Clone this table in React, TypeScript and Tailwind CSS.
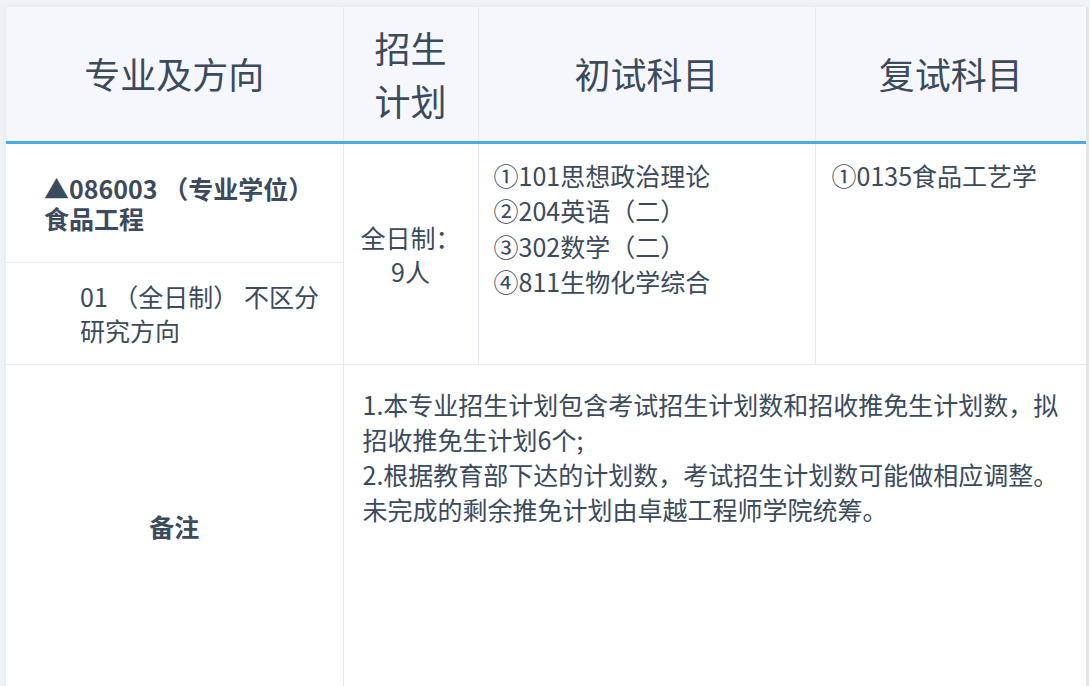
const font = { fontFamily: '"Noto Sans CJK SC", "Noto Sans", sans-serif' };

const firstExam = [
  "①101思想政治理论",
  "②204英语（二）",
  "③302数学（二）",
  "④811生物化学综合",
];

export default function App() {
  return (
    <div
      className="flex min-h-[686px] w-[1090px] bg-[#f1f4f7] pl-[6px] pt-[7px] text-[#3b4a5c]"
      style={font}
    >
      <div className="w-[1080px] bg-white shadow-[0_0_6px_rgba(40,60,90,0.08)]">
        <table className="w-[1080px] table-fixed border-collapse">
          <colgroup>
            <col className="w-[337px]" />
            <col className="w-[135px]" />
            <col className="w-[337px]" />
            <col className="w-[271px]" />
          </colgroup>
          <thead>
            <tr className="h-[135px] border-b-[3px] border-[#4ba9e7] bg-[#f5f7fc] text-[36px] leading-[53px] font-normal">
              <th className="border-r border-[#e6eaf0] font-normal">专业及方向</th>
              <th className="border-r border-[#e6eaf0] px-[18px] font-normal">招生计划</th>
              <th className="border-r border-[#e6eaf0] font-normal">初试科目</th>
              <th className="font-normal">复试科目</th>
            </tr>
          </thead>
          <tbody className="text-[25px] leading-[35px]">
            <tr className="h-[120px]">
              <td className="border-r border-b border-[#e6eaf0] pl-[38px] align-middle font-bold leading-[30px]">
                <div>▲086003 （专业学位）</div>
                <div>食品工程</div>
              </td>
              <td
                rowSpan={2}
                className="border-r border-b border-[#e6eaf0] text-center align-middle leading-[34px]"
              >
                全日制：
                <br />
                9人
              </td>
              <td
                rowSpan={2}
                className="border-r border-b border-[#e6eaf0] px-[15px] pt-[14px] align-top leading-[35.5px]"
              >
                {firstExam.map((s) => (
                  <div key={s}>{s}</div>
                ))}
              </td>
              <td
                rowSpan={2}
                className="border-b border-[#e6eaf0] px-[16px] pt-[14px] align-top leading-[35.5px]"
              >
                ①0135食品工艺学
              </td>
            </tr>
            <tr className="h-[102px]">
              <td className="border-r border-b border-[#e6eaf0] pl-[74px] align-middle leading-[34px]">
                01 （全日制） 不区分
                <br />
                研究方向
              </td>
            </tr>
            <tr className="h-[324px]">
              <td className="border-r border-[#e6eaf0] text-center align-middle font-bold">
                备注
              </td>
              <td colSpan={3} className="px-[19px] pt-[22px] align-top">
                1.本专业招生计划包含考试招生计划数和招收推免生计划数，拟招收推免生计划6个;
                <br />
                2.根据教育部下达的计划数，考试招生计划数可能做相应调整。未完成的剩余推免计划由卓越工程师学院统筹。
              </td>
            </tr>
          </tbody>
        </table>
      </div>
      <div className="w-[3px] self-stretch bg-[#e4e5e7]" />
      <div className="w-[1px] self-stretch bg-white" />
    </div>
  );
}
